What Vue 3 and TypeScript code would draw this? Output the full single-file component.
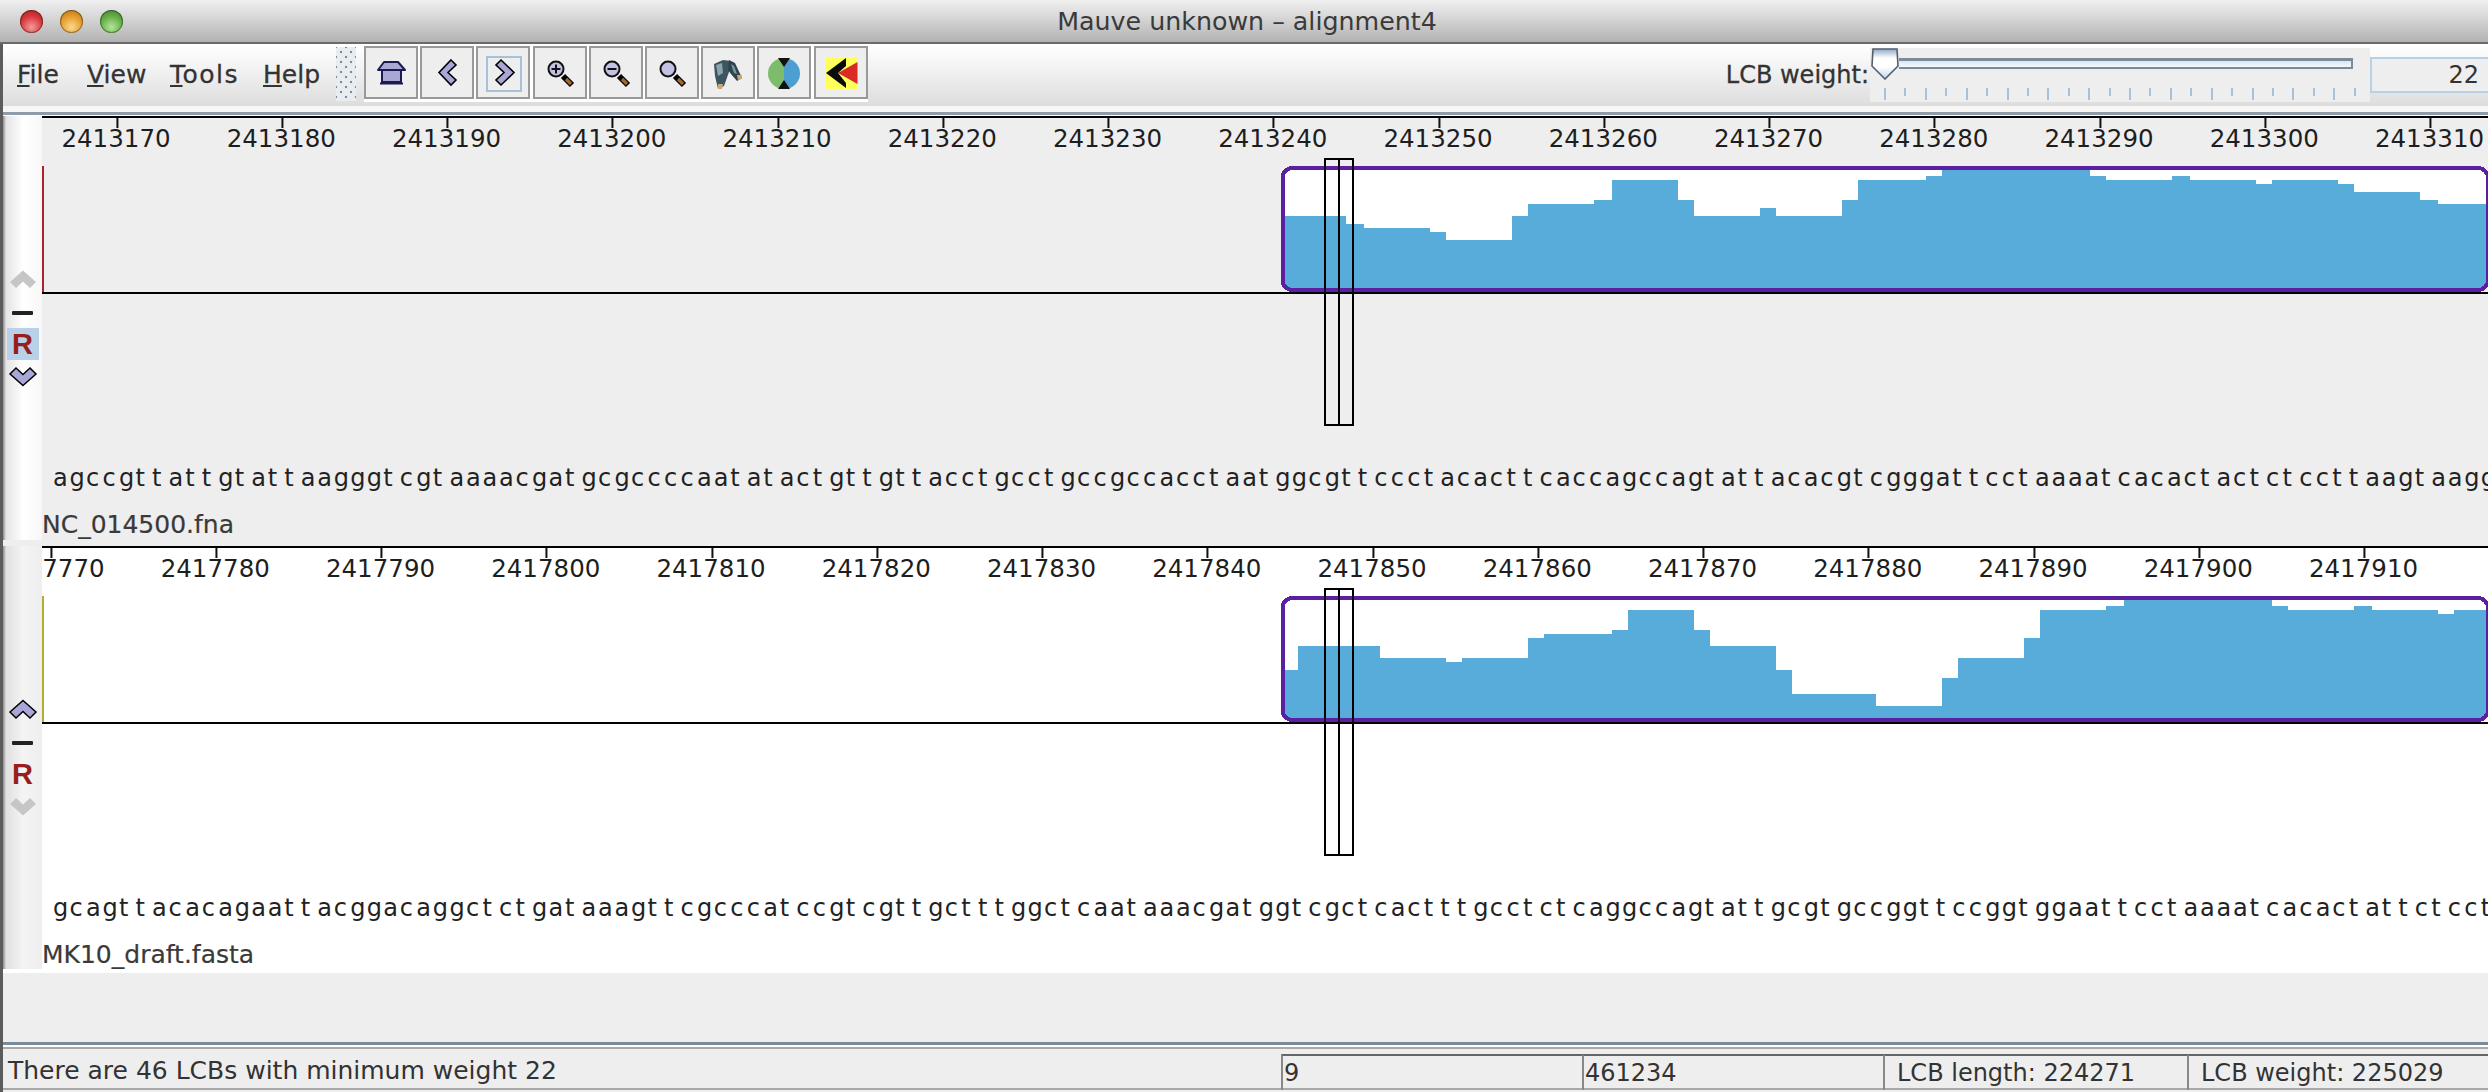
<script setup lang="ts">
type Step = [number, number]

interface Track {
  name: string
  firstPos: number
  firstTick: number
  seq: string
  top: number
  edge: string
  panelClass: string
  upActive: boolean
  reversed: boolean
  steps: Step[]
}

const BASE_WIDTH = 16.52
const TICK_STEP = 165.25

const tracks: Track[] = [
  {
    name: 'NC_014500.fna',
    firstPos: 2413170,
    firstTick: 117,
    seq: 'agccgttattgtattaagggtcgtaaaacgatgcgccccaatatactgttgttacctgcctgccgccacctaatggcgttccctacacttcaccagccagtattacacgtcgggattcctaaaatcacactactctccttaagtaagg',
    top: 166,
    edge: '#a8232b',
    panelClass: 'grey',
    upActive: false,
    reversed: true,
    steps: [
      [1283, 216], [1346, 224], [1364, 228], [1430, 232], [1446, 240], [1512, 216], [1528, 204], [1594, 200],
      [1612, 180], [1678, 200], [1694, 216], [1760, 208], [1776, 216], [1842, 200], [1858, 180], [1926, 176],
      [1942, 170], [2090, 176], [2106, 180], [2172, 176], [2190, 180], [2256, 184], [2272, 180], [2338, 184],
      [2354, 192], [2420, 200], [2438, 204]
    ]
  },
  {
    name: 'MK10_draft.fasta',
    firstPos: 2417770,
    firstTick: 51,
    seq: 'gcagttacacagaattacggacaggctctgataaagttcgcccatccgtcgttgctttggctcaataaacgatggtcgctcactttgcctctcaggccagtattgcgtgccggttccggtggaattcctaaaatcacactattctcctt',
    top: 596,
    edge: '#b3ad2e',
    panelClass: 'white',
    upActive: true,
    reversed: false,
    steps: [
      [1283, 670], [1298, 646], [1380, 658], [1446, 662], [1462, 658], [1528, 638], [1544, 634], [1612, 630],
      [1628, 610], [1694, 630], [1710, 646], [1776, 670], [1792, 694], [1876, 706], [1942, 678], [1958, 658],
      [2024, 638], [2040, 610], [2106, 606], [2124, 600], [2272, 606], [2288, 610], [2354, 606], [2372, 610],
      [2438, 614], [2454, 610]
    ]
  }
]

const labels = (t: Track) =>
  Array.from({ length: 15 }, (_, i) => ({
    text: String(t.firstPos + i * 10),
    left: t.firstTick - 42 + i * TICK_STEP
  }))

// stepped outline of the similarity plot, closed along the bottom of the box
const plotPoints = (t: Track) => {
  const pts: string[] = []
  t.steps.forEach(([x, y], i) => {
    const next = i + 1 < t.steps.length ? t.steps[i + 1][0] : 2488
    pts.push(`${x},${y}`, `${next},${y}`)
  })
  pts.push(`2488,${t.top + 124}`, `1283,${t.top + 124}`)
  return pts.join(' ')
}

const sliderTicks = Array.from({ length: 24 }, (_, i) => i % 2 === 0)
</script>

<template>
  <div class="app">
    <header class="titlebar">
      <div class="lights">
        <span class="light red"></span>
        <span class="light amber"></span>
        <span class="light green"></span>
      </div>
      <div class="title">Mauve unknown – alignment4</div>
    </header>

    <div class="window">
      <div class="toolbar">
        <nav class="menu">
          <span><u>F</u>ile</span>
          <span><u>V</u>iew</span>
          <span class="tools"><u>T</u>ools</span>
          <span><u>H</u>elp</span>
        </nav>
        <div class="grip"></div>
        <div class="buttons">
          <button class="tool">
            <svg viewBox="0 0 54 53">
              <rect x="18" y="23" width="19" height="13" fill="#a9a7d4" stroke="#1c1a55" stroke-width="2" />
              <polygon points="20,16 34,16 41,24 14,24" fill="#a9a7d4" stroke="#1c1a55" stroke-width="2" stroke-linejoin="round" />
              <path d="M16 37.500h23" stroke="#1c1a55" stroke-width="2" />
            </svg>
          </button>
          <button class="tool">
            <svg viewBox="0 0 54 53"><polygon points="31,14 36,19 28,26.500 36,34 31,39 19,26.500" fill="#a9a7d8" stroke="#000" stroke-width="1.6" /></svg>
          </button>
          <button class="tool hover">
            <svg viewBox="0 0 54 53">
              <rect x="11" y="11" width="34" height="34" fill="none" stroke="#a8c0d8" stroke-width="2" />
              <polygon points="25,14 38,26.500 25,39 20,34 28,26.500 20,19" fill="#a9a7d8" stroke="#000" stroke-width="1.6" />
            </svg>
          </button>
          <button class="tool">
            <svg viewBox="0 0 54 53">
              <path d="M30 30 39 39" stroke="#000" stroke-width="6" />
              <path d="M33 33 38 38" stroke="#a8662a" stroke-width="3.400" />
              <circle cx="23" cy="23" r="7.500" fill="#c4c2e2" stroke="#111" stroke-width="2" />
              <path d="M18.500 23h9M23 18.500v9" stroke="#111" stroke-width="2" />
            </svg>
          </button>
          <button class="tool">
            <svg viewBox="0 0 54 53">
              <path d="M30 30 39 39" stroke="#000" stroke-width="6" />
              <path d="M33 33 38 38" stroke="#a8662a" stroke-width="3.400" />
              <circle cx="23" cy="23" r="7.500" fill="#c4c2e2" stroke="#111" stroke-width="2" />
              <path d="M18.500 23h9" stroke="#111" stroke-width="2" />
            </svg>
          </button>
          <button class="tool">
            <svg viewBox="0 0 54 53">
              <path d="M30 30 39 39" stroke="#000" stroke-width="6" />
              <path d="M33 33 38 38" stroke="#a8662a" stroke-width="3.400" />
              <circle cx="23" cy="23" r="7.500" fill="#c4c2e2" stroke="#111" stroke-width="2" />
            </svg>
          </button>
          <button class="tool">
            <svg viewBox="0 0 54 53">
              <defs><filter id="soft"><feGaussianBlur stdDeviation="0.5" /></filter></defs>
              <g filter="url(#soft)">
                <path d="M13 18 22 14 30 15 28 26 23 40 17 43 14 30Z" fill="#3c5560" />
                <path d="M28 14 34 17 41 32 36 35 30 28 27 24Z" fill="#2f444e" />
                <path d="M15 19 21 17 22 27 17 30Z" fill="#8da4ad" />
                <path d="M30 18 33 20 36 28 33 27Z" fill="#7f98a2" />
                <path d="M17 38 22 38 21 43 17 43Z" fill="#c9a878" />
                <path d="M36 29 41 29 41 33 37 34Z" fill="#c9a878" />
              </g>
            </svg>
          </button>
          <button class="tool">
            <svg viewBox="0 0 54 53">
              <path d="M27 12a16 15.500 0 0 0 0 31Z" fill="#7dbc6b" />
              <path d="M27 12a16 15.500 0 0 1 0 31Z" fill="#4c9fd0" />
              <path d="M21 12h12l-6 9ZM21 43h12l-6-9Z" fill="#111" />
            </svg>
          </button>
          <button class="tool">
            <svg viewBox="0 0 54 53">
              <rect x="11.500" y="12" width="32" height="31" fill="#ffff5c" />
              <polygon points="43.500,16 43.500,38 24,27" fill="#d92a25" />
              <polygon points="12,27 32,12 32,20 24,27 32,37 32,42" fill="#0a0a0a" />
            </svg>
          </button>
        </div>
        <div class="weight">
          <label>LCB weight:</label>
          <div class="slider">
            <div class="slider-track"></div>
            <svg class="slider-thumb" viewBox="0 0 28 32">
              <defs>
                <linearGradient id="thumb" x1="0" y1="0" x2="0" y2="1">
                  <stop offset="0" stop-color="#8fa9c8" />
                  <stop offset="0.3" stop-color="#fff" />
                  <stop offset="0.6" stop-color="#fff" />
                  <stop offset="1" stop-color="#bcd4f0" />
                </linearGradient>
              </defs>
              <polygon points="2,1 26,1 27,18 14,31 1,18" fill="url(#thumb)" stroke="#55606e" stroke-width="1.600" />
            </svg>
            <div class="slider-ticks">
              <i v-for="(major, i) in sliderTicks" :key="i" :class="{ major }"></i>
            </div>
          </div>
          <div class="weight-input">22</div>
        </div>
      </div>
      <div class="toolbar-rule"></div>

      <section v-for="t in tracks" :key="t.name" class="panel" :class="t.panelClass">
        <aside class="side">
          <svg class="chev" viewBox="0 0 26 18">
            <polygon points="13,0.500 26,12 20,18 13,11.500 6,18 0,12" :fill="t.upActive ? '#a9a7d8' : '#c6c6c6'" :stroke="t.upActive ? '#000' : 'none'" stroke-width="1.500" />
          </svg>
          <span class="minus"></span>
          <span class="rev" :class="{ on: t.reversed }">R</span>
          <svg class="chev" viewBox="0 0 26 18">
            <polygon points="13,17.500 26,6 20,0 13,6.500 6,0 0,6" :fill="t.upActive ? '#c6c6c6' : '#a9a7d8'" :stroke="t.upActive ? 'none' : '#000'" stroke-width="1.500" />
          </svg>
        </aside>

        <div class="track">
          <div class="ruler">
            <div v-for="l in labels(t)" :key="l.text" class="mark" :style="{ left: l.left + 'px' }">
              <span class="tick"></span>
              <span class="pos">{{ l.text }}</span>
            </div>
          </div>

          <svg class="plot" :viewBox="`42 ${t.top} 2446 128`" width="2446" height="128">
            <defs>
              <clipPath :id="`box-${t.top}`">
                <rect x="1282" :y="t.top + 2" width="1206" height="122" rx="10" />
              </clipPath>
            </defs>
            <rect x="42" :y="t.top" width="2" height="126" :fill="t.edge" />
            <rect x="1282" :y="t.top + 2" width="1206" height="122" rx="10" fill="#fff" />
            <polygon :points="plotPoints(t)" fill="#57acd9" :clip-path="`url(#box-${t.top})`" shape-rendering="crispEdges" />
            <rect x="1282.500" :y="t.top + 2" width="1205.500" height="122" rx="10" fill="none" stroke="#5b20a2" stroke-width="4" shape-rendering="crispEdges" />
            <rect x="42" :y="t.top + 126" width="2446" height="2" fill="#000" />
          </svg>

          <div class="seq"><span v-for="(c, i) in t.seq" :key="i" class="base" :style="{ width: BASE_WIDTH + 'px' }">{{ c }}</span></div>
          <div class="name">{{ t.name }}</div>

          <div class="cursor"></div>
        </div>
      </section>

      <div class="filler"></div>

      <footer class="status">
        <div class="cell first">There are 46 LCBs with minimum weight 22</div>
        <div class="cell">9</div>
        <div class="cell">461234</div>
        <div class="cell wide">LCB length: 224271</div>
        <div class="cell wide">LCB weight: 225029</div>
      </footer>
    </div>
  </div>
</template>

<style>
html,
body {
  margin: 0;
  background: #fff;
}
</style>

<style scoped>
.app {
  width: 2488px;
  height: 1092px;
  overflow: hidden;
  font-family: "DejaVu Sans", "Liberation Sans", sans-serif;
  font-size: 24px;
  color: #2a2a2a;
  background: #eee;
}

/* title bar */
.titlebar {
  position: relative;
  height: 42px;
  display: flex;
  align-items: center;
  justify-content: center;
  background: linear-gradient(#f0f0f0, #e4e4e4 20%, #b2b2b2);
  border-bottom: 2px solid #6a6a6a;
}
.lights {
  position: absolute;
  left: 20px;
  top: 10px;
  display: flex;
  gap: 17px;
}
.light {
  width: 23px;
  height: 23px;
  border-radius: 50%;
  box-shadow: inset 0 0 0 1px rgba(0, 0, 0, 0.35);
}
.red {
  background: radial-gradient(circle at 50% 75%, #f59a9a, #d8343a 55%, #9d2327);
}
.amber {
  background: radial-gradient(circle at 50% 75%, #fbd98c, #e59a2a 55%, #a86e1c);
}
.green {
  background: radial-gradient(circle at 50% 75%, #b5e59a, #62ad46 55%, #3f7c2c);
}
.title {
  font-size: 25.300px;
  color: #3a3a3a;
  margin-left: 6px;
}

.window {
  display: flex;
  flex-direction: column;
  height: 1048px;
  border-left: 3px solid #5c5c5c;
  background: #eee;
}

/* toolbar */
.toolbar {
  display: flex;
  align-items: flex-start;
  height: 60px;
  flex: none;
  background: linear-gradient(#fff, #fbfbfb 15%, #dedede);
}
.menu {
  width: 333px;
  flex: none;
  box-sizing: border-box;
  padding: 16px 0 0 14px;
  display: grid;
  grid-template-columns: 70px 83px 93px auto;
  line-height: 29px;
  font-size: 25px;
  color: #333;
  -webkit-text-stroke: 0.3px #333;
}
.tools {
  letter-spacing: 1.500px;
}
.grip {
  width: 20px;
  height: 54px;
  margin-top: 3px;
  flex: none;
  background-color: #e8edf1;
  background-image: radial-gradient(circle, #7f8b99 1.200px, transparent 1.600px), radial-gradient(circle, #7f8b99 1.200px, transparent 1.600px);
  background-size: 10px 10px;
  background-position: 0 0, 5px 5px;
}
.buttons {
  display: flex;
  gap: 2.200px;
  margin-left: 8px;
  margin-top: 2px;
  padding-bottom: 3px;
  background: #fff;
}
.tool {
  width: 54px;
  height: 53px;
  padding: 0;
  flex: none;
  box-sizing: border-box;
  border: 2px solid #999;
  background: #eee;
  position: relative;
}
.tool svg {
  position: absolute;
  left: -2px;
  top: -2px;
  width: 54px;
  height: 53px;
  display: block;
}
.weight {
  display: flex;
  align-items: flex-start;
  margin-left: auto;
}
.weight label {
  margin-top: 17px;
  margin-right: 1px;
  line-height: 29px;
  color: #333;
  -webkit-text-stroke: 0.3px #333;
}
.slider {
  position: relative;
  width: 500px;
  height: 54px;
  margin-top: 4px;
  background: #eee;
}
.slider-track {
  margin: 10px 17px 0 29px;
  height: 11px;
  box-sizing: border-box;
  border: solid #7a8b9c;
  border-width: 3px 2px 2px 0;
  background: linear-gradient(#dce6f0, #f6f9fc);
}
.slider-thumb {
  position: absolute;
  left: 1px;
  top: 0;
  width: 28px;
  height: 32px;
}
.slider-ticks {
  margin: 19px 14px 0 14px;
  display: flex;
  justify-content: space-between;
  align-items: flex-start;
}
.slider-ticks i {
  width: 2px;
  height: 8px;
  background: #a8c0d8;
}
.slider-ticks i.major {
  height: 12px;
}
.weight-input {
  width: 118px;
  height: 36px;
  margin-top: 13px;
  box-sizing: border-box;
  border: 2px solid #b8d0e8;
  border-right: 0;
  background: #eee;
  text-align: right;
  padding-right: 9px;
  line-height: 33px;
  color: #333;
}
.toolbar-rule {
  height: 12px;
  flex: none;
  background: linear-gradient(#dcdcdc 0 2px, #f6f6f6 2px 8px, #8e9ca9 8px 11px, #fff 11px);
}

/* sequence panels */
.panel {
  display: flex;
  flex: none;
}
.panel.grey {
  height: 430px;
  background: #eee;
}
.panel.white {
  height: 427px;
  background: #fff;
}
.side {
  width: 39px;
  flex: none;
  box-sizing: border-box;
  display: flex;
  flex-direction: column;
  align-items: center;
  padding-top: 154px;
  background: linear-gradient(90deg, #8a8a8a, #e4e4e4 3px, #fff 20px, #f7f7f7);
}
.panel.grey .side {
  height: 424px;
}
.panel.white .side {
  height: 423px;
  background: linear-gradient(90deg, #8a8a8a, #e0e0e0 3px, #f4f4f4 20px, #eee);
}
.chev {
  width: 26px;
  height: 18px;
  flex: none;
  overflow: visible;
}
.minus {
  width: 21px;
  height: 4px;
  margin: 23px 0 13px;
  background: #222;
  border-radius: 1px;
}
.rev {
  width: 32px;
  height: 32px;
  margin-bottom: 8px;
  text-align: center;
  font: bold 29px/32px "Liberation Sans", sans-serif;
  color: #981d1d;
}
.rev.on {
  background: #b8d0e8;
}
.track {
  position: relative;
  flex: 1;
  min-width: 0;
  overflow: hidden;
  display: flex;
  flex-direction: column;
}
.ruler {
  position: relative;
  height: 50px;
  flex: none;
  box-sizing: border-box;
  border-top: 2px solid #000;
}
.mark {
  position: absolute;
  top: 0;
  transform: translateX(-50%);
  display: flex;
  flex-direction: column;
  align-items: center;
}
.tick {
  width: 2px;
  height: 10px;
  background: #111;
  margin-bottom: -4px;
}
.pos {
  line-height: 29px;
  font-size: 24.500px;
  margin-right: 2px;
  color: #1e1e1e;
  white-space: nowrap;
}
.plot {
  display: block;
  flex: none;
}
.seq {
  margin-top: 169px;
  padding-left: 11px;
  height: 30px;
  line-height: 30px;
  font-size: 24px;
  white-space: nowrap;
  color: #222;
}
.base {
  display: inline-block;
}
.name {
  margin-top: 17px;
  height: 30px;
  line-height: 30px;
  font-size: 25px;
  color: #3a3a3a;
  -webkit-text-stroke: 0.2px #3a3a3a;
}
.cursor {
  position: absolute;
  left: 1282px;
  top: 42px;
  width: 30px;
  height: 268px;
  box-sizing: border-box;
  border: 2px solid #000;
  background: linear-gradient(#000, #000) center / 2px 100% no-repeat;
}

.filler {
  flex: 1;
}

/* status bar */
.status {
  flex: none;
  height: 48px;
  box-sizing: border-box;
  border-top: 3px solid #7a8b9a;
  display: grid;
  grid-template-columns: 1278px 301px 301px 304px 301px;
  margin-bottom: 2px;
  position: relative;
  background: #eee;
  padding: 7px 0 0;
  box-shadow: inset 0 -2px 0 #a8a8a8, inset 0 2px 0 #fff, inset 0 4px 0 #a8a8a8;
}
.cell {
  box-sizing: border-box;
  height: 36px;
  margin-top: 2px;
  padding-left: 1px;
  border-top: 2px solid #666;
  border-left: 2px solid #888;
  line-height: 34px;
  color: #333;
  white-space: nowrap;
}
.cell.first {
  border: 0;
  padding-left: 5px;
  font-size: 25px;
}
.cell.wide {
  padding-left: 12px;
}
</style>
